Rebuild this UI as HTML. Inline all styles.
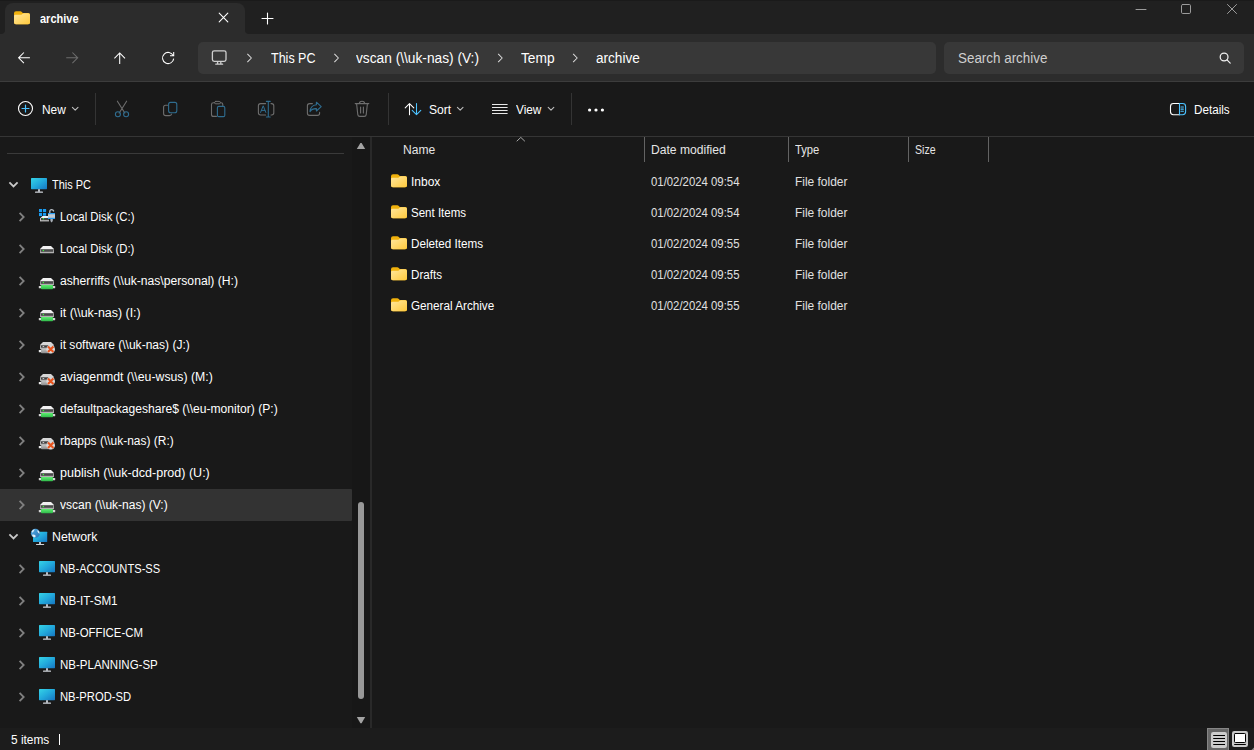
<!DOCTYPE html>
<html><head><meta charset="utf-8"><title>archive</title>
<style>
*{box-sizing:border-box;margin:0;padding:0}
html,body{width:1254px;height:750px;overflow:hidden;background:#191919;font-family:"Liberation Sans",sans-serif;color:#fff;font-size:12px}
div{position:absolute}
#titlebar{left:0;top:0;width:1254px;height:34px;background:#202020;border-top:1px solid #1a1a1a}
#tab{left:5px;top:2.5px;width:240px;height:31.5px;background:#2c2c2c;border-radius:8px 8px 0 0}
#navbar{left:0;top:34px;width:1254px;height:48px;background:#2c2c2c;border-bottom:1px solid #3c3c3c}
#addr{left:198px;top:42px;width:738px;height:32px;background:#383838;border-radius:5px}
#search{left:944px;top:42px;width:300px;height:32px;background:#383838;border-radius:5px}
#toolbar{left:0;top:82px;width:1254px;height:55px;background:#191919;border-bottom:1px solid #353535}
.vs{width:1px;top:93px;height:32px;background:#343434}
.cs{width:1px;top:137px;height:25px;background:#636363}
#navdiv{left:7px;top:153px;width:337px;height:1px;background:#3a3a3a}
#panediv{left:370px;top:137px;width:2px;height:591px;background:#292929}
#track{left:352px;top:137px;width:18px;height:591px;background:#171717}
#sel{left:0;top:489px;width:352px;height:32px;background:#333;border-radius:0 1px 1px 0}
#thumb{left:358px;top:501.5px;width:6px;height:197.5px;background:#989898;border-radius:3px}
#status{left:0;top:728px;width:1254px;height:22px;background:#1c1c1c}
#vb1{left:1207px;top:728px;width:22px;height:23px;background:#676767;border:1px solid #868686}
.t{position:absolute;white-space:pre;line-height:16px;color:#fff;transform-origin:0 50%}
svg{position:absolute;left:0;top:0;overflow:visible}
</style></head><body>
<div id="titlebar"></div>
<div id="tab"></div>
<div id="navbar"></div>
<div id="addr"></div>
<div id="search"></div>
<div id="toolbar"></div>
<div class="vs" style="left:95px"></div><div class="vs" style="left:388px"></div><div class="vs" style="left:571px"></div>
<div id="navdiv"></div>
<div id="track"></div>
<div id="panediv"></div>
<div id="sel"></div>
<div id="thumb"></div>
<div class="cs" style="left:644px"></div><div class="cs" style="left:788px"></div><div class="cs" style="left:908px"></div><div class="cs" style="left:988px"></div>
<div id="status"></div>
<div id="vb1"></div>
<span class="t" style="left:39.5px;top:10.8px;font-size:12px;transform:scaleX(0.9160);font-weight:700">archive</span>
<span class="t" style="left:271.2px;top:50.1px;font-size:14px;transform:scaleX(0.8936)">This PC</span>
<span class="t" style="left:356.1px;top:50.1px;font-size:14px;transform:scaleX(0.9800)">vscan (\\uk-nas) (V:)</span>
<span class="t" style="left:520.7px;top:50.1px;font-size:14px;transform:scaleX(0.9815)">Temp</span>
<span class="t" style="left:595.5px;top:50.1px;font-size:14px;transform:scaleX(0.9703)">archive</span>
<span class="t" style="left:958.0px;top:50.1px;font-size:14px;transform:scaleX(0.9573);color:#cfcfcf">Search archive</span>
<span class="t" style="left:42.0px;top:101.8px;font-size:12px;transform:scaleX(0.9910)">New</span>
<span class="t" style="left:428.7px;top:101.8px;font-size:12px;transform:scaleX(1.0084)">Sort</span>
<span class="t" style="left:515.8px;top:101.8px;font-size:12px;transform:scaleX(0.9846)">View</span>
<span class="t" style="left:1194.0px;top:101.8px;font-size:12px;transform:scaleX(0.9731)">Details</span>
<span class="t" style="left:52.2px;top:176.8px;font-size:12px;transform:scaleX(0.9113)">This PC</span>
<span class="t" style="left:59.9px;top:208.8px;font-size:12px;transform:scaleX(0.9468)">Local Disk (C:)</span>
<span class="t" style="left:59.9px;top:240.8px;font-size:12px;transform:scaleX(0.9455)">Local Disk (D:)</span>
<span class="t" style="left:59.9px;top:272.8px;font-size:12px;transform:scaleX(1.0123)">asherriffs (\\uk-nas\personal) (H:)</span>
<span class="t" style="left:59.9px;top:304.8px;font-size:12px;transform:scaleX(1.0344)">it (\\uk-nas) (I:)</span>
<span class="t" style="left:59.9px;top:336.8px;font-size:12px;transform:scaleX(1.0034)">it software (\\uk-nas) (J:)</span>
<span class="t" style="left:59.9px;top:368.8px;font-size:12px;transform:scaleX(1.0229)">aviagenmdt (\\eu-wsus) (M:)</span>
<span class="t" style="left:59.9px;top:400.8px;font-size:12px;transform:scaleX(1.0074)">defaultpackageshare$ (\\eu-monitor) (P:)</span>
<span class="t" style="left:59.9px;top:432.8px;font-size:12px;transform:scaleX(0.9971)">rbapps (\\uk-nas) (R:)</span>
<span class="t" style="left:59.9px;top:464.8px;font-size:12px;transform:scaleX(1.0447)">publish (\\uk-dcd-prod) (U:)</span>
<span class="t" style="left:59.9px;top:496.8px;font-size:12px;transform:scaleX(1.0011)">vscan (\\uk-nas) (V:)</span>
<span class="t" style="left:51.8px;top:528.8px;font-size:12px;transform:scaleX(1.0315)">Network</span>
<span class="t" style="left:59.9px;top:560.8px;font-size:12px;transform:scaleX(0.9276)">NB-ACCOUNTS-SS</span>
<span class="t" style="left:59.9px;top:592.8px;font-size:12px;transform:scaleX(0.9706)">NB-IT-SM1</span>
<span class="t" style="left:59.9px;top:624.8px;font-size:12px;transform:scaleX(0.9504)">NB-OFFICE-CM</span>
<span class="t" style="left:59.9px;top:656.8px;font-size:12px;transform:scaleX(0.9585)">NB-PLANNING-SP</span>
<span class="t" style="left:59.9px;top:688.8px;font-size:12px;transform:scaleX(0.9353)">NB-PROD-SD</span>
<span class="t" style="left:402.9px;top:141.8px;font-size:12px;transform:scaleX(1.0058);color:#e6e6e6">Name</span>
<span class="t" style="left:650.9px;top:141.8px;font-size:12px;transform:scaleX(1.0088);color:#e6e6e6">Date modified</span>
<span class="t" style="left:795.2px;top:141.8px;font-size:12px;transform:scaleX(0.9341);color:#e6e6e6">Type</span>
<span class="t" style="left:914.6px;top:141.8px;font-size:12px;transform:scaleX(0.8825);color:#e6e6e6">Size</span>
<span class="t" style="left:410.9px;top:173.8px;font-size:12px;transform:scaleX(0.9980)">Inbox</span>
<span class="t" style="left:650.5px;top:173.8px;font-size:12px;transform:scaleX(0.9473);color:#e0e0e0">01/02/2024 09:54</span>
<span class="t" style="left:794.7px;top:173.8px;font-size:12px;transform:scaleX(0.9945);color:#e0e0e0">File folder</span>
<span class="t" style="left:410.9px;top:204.8px;font-size:12px;transform:scaleX(0.9606)">Sent Items</span>
<span class="t" style="left:650.5px;top:204.8px;font-size:12px;transform:scaleX(0.9473);color:#e0e0e0">01/02/2024 09:54</span>
<span class="t" style="left:794.7px;top:204.8px;font-size:12px;transform:scaleX(0.9945);color:#e0e0e0">File folder</span>
<span class="t" style="left:410.9px;top:235.8px;font-size:12px;transform:scaleX(0.9737)">Deleted Items</span>
<span class="t" style="left:650.5px;top:235.8px;font-size:12px;transform:scaleX(0.9473);color:#e0e0e0">01/02/2024 09:55</span>
<span class="t" style="left:794.7px;top:235.8px;font-size:12px;transform:scaleX(0.9945);color:#e0e0e0">File folder</span>
<span class="t" style="left:410.9px;top:266.8px;font-size:12px;transform:scaleX(0.9683)">Drafts</span>
<span class="t" style="left:650.5px;top:266.8px;font-size:12px;transform:scaleX(0.9473);color:#e0e0e0">01/02/2024 09:55</span>
<span class="t" style="left:794.7px;top:266.8px;font-size:12px;transform:scaleX(0.9945);color:#e0e0e0">File folder</span>
<span class="t" style="left:410.9px;top:297.8px;font-size:12px;transform:scaleX(0.9743)">General Archive</span>
<span class="t" style="left:650.5px;top:297.8px;font-size:12px;transform:scaleX(0.9473);color:#e0e0e0">01/02/2024 09:55</span>
<span class="t" style="left:794.7px;top:297.8px;font-size:12px;transform:scaleX(0.9945);color:#e0e0e0">File folder</span>
<span class="t" style="left:11.0px;top:731.8px;font-size:12px;transform:scaleX(0.9900)">5 items</span>
<svg width="1254" height="750" viewBox="0 0 1254 750" fill="none" stroke-linecap="round" stroke-linejoin="round">
<defs>
<linearGradient id="gf" x1="0" y1="0" x2="1" y2="1"><stop offset="0" stop-color="#ffe79e"/><stop offset="1" stop-color="#ffc93c"/></linearGradient>
<linearGradient id="gm" x1="0" y1="0" x2="1" y2="1"><stop offset="0" stop-color="#35d3e6"/><stop offset="0.5" stop-color="#22a9dc"/><stop offset="1" stop-color="#1676c2"/></linearGradient>
<linearGradient id="gg" x1="0" y1="0" x2="0" y2="1"><stop offset="0" stop-color="#5ff070"/><stop offset="1" stop-color="#2fb84a"/></linearGradient>
<linearGradient id="gl" x1="0" y1="0" x2="1" y2="1"><stop offset="0" stop-color="#5ab0e6"/><stop offset="1" stop-color="#2672b4"/></linearGradient>
<linearGradient id="gp" x1="0" y1="0" x2="0" y2="1"><stop offset="0" stop-color="#c4c4c4"/><stop offset="1" stop-color="#8a8a8a"/></linearGradient>
<g id="folder" stroke="none">
<path d="M0 2.2 Q0 0.2 2 0.2 H6.3 Q7.2 0.2 7.8 0.9 L8.8 2.1 H14.2 Q16 2.1 16 3.9 V11.4 Q16 13.2 14.2 13.2 H1.8 Q0 13.2 0 11.4Z" fill="#f0b10c"/>
<path d="M0 5 Q0 3.7 1.4 3.7 H6.6 Q7.4 3.7 8 3.2 L8.6 2.7 Q9.2 2.3 10 2.3 H14.3 Q16 2.3 16 4 V11.4 Q16 13.2 14.2 13.2 H1.8 Q0 13.2 0 11.4Z" fill="url(#gf)"/>
</g>
<g id="mon" stroke="none">
<rect x="0" y="0" width="16" height="11.2" rx="0.6" fill="url(#gm)"/>
<rect x="7" y="11.2" width="2" height="2.6" fill="#b9c0c8"/>
<rect x="4" y="13.6" width="8" height="1.2" rx="0.4" fill="#cfd4da"/>
</g>
<g id="drv" stroke="none">
<path d="M3 0 H11 L14 3 H0Z" fill="#f1f1f1"/>
<rect x="0" y="3" width="14" height="4.2" rx="0.4" fill="#b0b0b0"/>
<rect x="0.8" y="3.3" width="12.4" height="2.5" fill="#4a4a4a"/>
<circle cx="3.4" cy="4.5" r="0.75" fill="#3cf03c"/>
</g>
<g id="ndrv" stroke="none">
<use href="#drv"/>
<rect x="-1.2" y="8" width="16.4" height="2.2" rx="0.5" fill="#d6d6d6"/>
<rect x="1" y="6.9" width="12" height="4.4" rx="0.8" fill="url(#gg)"/>
</g>
<g id="xdrv" stroke="none">
<path d="M3 0 H11 L14 3 H0Z" fill="#d6d6d6"/>
<rect x="0" y="3" width="14" height="4.2" rx="0.4" fill="#b4b4b4"/>
<rect x="1" y="3.4" width="7" height="2.2" fill="#3c3c3c"/>
<rect x="2.6" y="4" width="1.6" height="0.9" fill="#d8d8d8"/>
<rect x="-1.2" y="8" width="6" height="2.2" rx="0.5" fill="#ececec"/>
<rect x="1" y="6.9" width="12" height="4.4" rx="0.8" fill="url(#gp)"/>
<circle cx="10.7" cy="7.2" r="4.3" fill="#d9d9d9"/>
<path d="M8 4.5 L13.4 9.9 M13.4 4.5 L8 9.9" stroke="#e9531c" stroke-width="2.1" stroke-linecap="butt"/>
</g>
<path id="chr" d="M0 0 L4.1 4.2 L0 8.4" stroke="#808080" stroke-width="1.8" fill="none" stroke-linecap="butt" stroke-linejoin="miter"/>
<path id="chd" d="M0 0 L4.1 4.1 L8.2 0" stroke="#c8c8c8" stroke-width="1.8" fill="none" stroke-linecap="butt" stroke-linejoin="miter"/>
<path id="bc" d="M0.2 0.2 L4 4 L0.2 7.8" stroke="#dcdcdc" stroke-width="1.05" fill="none"/>
<path id="dd" d="M0 0 L2.8 2.8 L5.6 0" stroke="#bdbdbd" stroke-width="1.1" fill="none"/>
</defs>

<!-- tab -->
<use href="#folder" x="14" y="11"/>
<path d="M219.2 13.2 L227.8 21.8 M227.8 13.2 L219.2 21.8" stroke="#fff" stroke-width="1.1"/>
<path d="M262 18.5 H273 M267.5 13 V24" stroke="#fff" stroke-width="1.1"/>
<!-- tab outer curves -->
<path d="M1 34 H5 V30 Q5 34 1 34Z" fill="#2c2c2c" stroke="none"/>
<path d="M249 34 H245 V30 Q245 34 249 34Z" fill="#2c2c2c" stroke="none"/>
<!-- window controls -->
<g stroke="#9b9b9b" stroke-width="1">
<path d="M1136 9.5 H1146"/>
<rect x="1181.5" y="4.5" width="9" height="9" rx="1.2"/>
<path d="M1227.2 4.2 L1236.8 13.8 M1236.8 4.2 L1227.2 13.8" stroke-linecap="butt"/>
</g>
<!-- nav arrows -->
<g stroke="#fff" stroke-width="1.05" stroke-linecap="butt" stroke-linejoin="miter">
<path d="M18.8 57.8 H29.9 M23.9 52.5 L18.6 57.8 L23.9 63.1"/>
<path d="M119.7 53 V64 M114.4 58.3 L119.7 53 L125 58.3"/>
<path d="M173.2 55.6 A5.6 5.6 0 1 0 173.7 58.6 M173.7 52 V55.7 H170"/>
</g>
<path d="M66.2 57.8 H77.5 M72.4 52.5 L77.7 57.8 L72.4 63.1" stroke="#6c6c6c" stroke-width="1.05" stroke-linecap="butt" stroke-linejoin="miter"/>
<!-- address icons -->
<g stroke="#cfcfcf" stroke-width="1.3">
<rect x="212.4" y="50.8" width="13.6" height="10.6" rx="1.8"/>
<path d="M217.6 61.6 V64 M220.8 61.6 V64 M215.8 64.2 H222.6"/>
</g>
<use href="#bc" x="247.4" y="54"/>
<use href="#bc" x="334.4" y="54"/>
<use href="#bc" x="498.2" y="54"/>
<use href="#bc" x="573.2" y="54"/>
<!-- search -->
<g stroke="#f0f0f0" stroke-width="1.25"><circle cx="1224.1" cy="57" r="3.9"/><path d="M1227 59.9 L1230.2 63.1"/></g>

<!-- toolbar: New -->
<circle cx="25.5" cy="108.5" r="7" stroke="#fff" stroke-width="1.1"/>
<path d="M22 108.5 H29 M25.5 105 V112" stroke="#4cc2ff" stroke-width="1.2"/>
<use href="#dd" x="72.4" y="107.4"/>
<!-- cut -->
<path d="M117.4 101.2 L124.8 113 M126.6 101.2 L119.2 113" stroke="#6e6e6e" stroke-width="1.1"/>
<circle cx="117.9" cy="114.2" r="2.5" stroke="#2f6d90" stroke-width="1.1"/><circle cx="126.1" cy="114.2" r="2.5" stroke="#2f6d90" stroke-width="1.1"/>
<!-- copy -->
<path d="M167.5 105.2 H165.6 Q163.6 105.2 163.6 107.2 V113.4 Q163.6 115.6 165.8 115.6 H169.4 Q171.4 115.6 171.6 114" stroke="#6e6e6e" stroke-width="1.1"/>
<rect x="168.6" y="102.4" width="8.2" height="10.4" rx="2" stroke="#2f6d90" stroke-width="1.1"/>
<!-- paste -->
<path d="M216.4 116.4 H213.4 Q211.5 116.4 211.5 114.4 V104.6 Q211.5 102.8 213.4 102.8 H214.6 M220.4 102.8 H221 Q222.8 102.8 222.8 104.6 V105.6" stroke="#6e6e6e" stroke-width="1.1"/>
<rect x="214.6" y="101.4" width="5.8" height="2.4" rx="1.2" stroke="#6e6e6e" stroke-width="1"/>
<rect x="217.4" y="106.4" width="7.4" height="10.2" rx="1.4" stroke="#2f6d90" stroke-width="1.1"/>
<!-- rename -->
<path d="M265.6 103.6 H260.6 Q258.4 103.6 258.4 105.8 V112.8 Q258.4 115 260.6 115 H265.6 M271 103.6 H271.6 Q273.8 103.6 273.8 105.8 V112.8 Q273.8 115 271.6 115 H271" stroke="#6e6e6e" stroke-width="1.1"/>
<path d="M268.3 101.4 V117 M266.4 101.4 H270.2 M266.4 117 H270.2" stroke="#2f6d90" stroke-width="1.1"/>
<path d="M260.6 112.4 L263.2 105.8 L265.8 112.4 M261.5 110.4 H264.9" stroke="#2f6d90" stroke-width="1"/>
<!-- share -->
<path d="M312.4 103.6 H309.6 Q307.4 103.6 307.4 105.8 V113.2 Q307.4 115.4 309.6 115.4 H317.4 Q319.6 115.4 319.6 113.2 V112.4" stroke="#6e6e6e" stroke-width="1.1"/>
<path d="M316.4 102.2 L321.2 106.6 L316.4 111 V108.6 Q312 108.4 310 111.6 Q310.6 105.4 316.4 104.8Z" stroke="#2f6d90" stroke-width="1.1"/>
<!-- delete -->
<path d="M355.2 103.6 H368.8 M359.4 103.4 Q359.4 101.2 362 101.2 Q364.6 101.2 364.6 103.4 M356.6 103.8 L357.8 114.6 Q358 116.4 359.8 116.4 H364.2 Q366 116.4 366.2 114.6 L367.4 103.8 M360.6 107 V113 M363.4 107 V113" stroke="#6e6e6e" stroke-width="1.1"/>
<!-- sort -->
<path d="M409.5 114.8 V103.6 M405.2 107.9 L409.5 103.6 L413.8 107.9" stroke="#fff" stroke-width="1.05"/>
<path d="M416.5 103.4 V114.6 M412.2 110.3 L416.5 114.6 L420.8 110.3" stroke="#4cc2ff" stroke-width="1.05"/>
<use href="#dd" x="457.4" y="107.4"/>
<!-- view -->
<path d="M492 104.5 H507.6 M492 107.5 H507.6 M492 110.5 H507.6 M492 113.5 H507.6" stroke="#e8e8e8" stroke-width="1" stroke-linecap="butt"/>
<use href="#dd" x="548.2" y="107.4"/>
<!-- more -->
<g fill="#fff" stroke="none"><circle cx="589.6" cy="110" r="1.6"/><circle cx="596" cy="110" r="1.6"/><circle cx="602.4" cy="110" r="1.6"/></g>
<!-- details -->
<path d="M1179.5 103.5 H1173.4 Q1170.5 103.5 1170.5 106.4 V111.8 Q1170.5 114.7 1173.4 114.7 H1179.5" stroke="#fff" stroke-width="1.1"/>
<path d="M1179.5 103.5 H1182.6 Q1185.6 103.5 1185.6 106.4 V111.8 Q1185.6 114.7 1182.6 114.7 H1179.5Z M1181 107 H1183.4 M1181 109.1 H1183.4 M1181 111.2 H1183.4" stroke="#4cc2ff" stroke-width="1.1"/>

<!-- scroll arrows -->
<path d="M356.8 149 L360.4 143 H361.6 L365.2 149Z" fill="#a3a3a3" stroke="none"/>
<path d="M356.8 717 L360.4 723.2 H361.6 L365.2 717Z" fill="#a3a3a3" stroke="none"/>
<!-- sort caret -->
<path d="M517 141 L520.8 137.4 L524.6 141" stroke="#a8a8a8" stroke-width="1"/>

<!-- nav pane icons -->
<use href="#chd" x="9.4" y="182.4"/>
<use href="#mon" x="31" y="178"/>
<use href="#chd" x="9.4" y="534.4"/>
<!-- network icon -->
<g stroke="none">
<rect x="33" y="531.8" width="14.2" height="10.2" rx="0.5" fill="url(#gm)"/>
<rect x="39" y="542" width="2" height="2.2" fill="#b9c0c8"/><rect x="36" y="544" width="8.2" height="1.1" rx="0.4" fill="#cfd4da"/>
<circle cx="35.4" cy="533.2" r="4.5" fill="url(#gl)"/>
<path d="M31.6 531.6 Q32.6 529.6 34.8 529.2 Q34 531 32.6 532.8Z M37.6 530 Q39.6 531.2 39.7 533.8 Q38.2 533.2 37.4 531.4Z M31.8 534.8 Q33.6 533.8 35.4 535.2 Q36 536.6 35 537.6 Q32.6 537.2 31.8 534.8Z" fill="#e4eef7"/>
</g>
<!-- drives -->
<g stroke="none">
<!-- C: -->
<path d="M42.5 216 H48.5 V218.6 H40Z" fill="#f1f1f1"/>
<rect x="40" y="218" width="9" height="3.4" fill="#c2c2c2"/><rect x="41" y="218" width="8" height="2.2" fill="#454545"/><circle cx="43.4" cy="218.7" r="0.75" fill="#3cf03c"/>
<g fill="#1b9bf0"><rect x="39" y="209" width="3.1" height="3.1"/><rect x="43" y="209" width="3.1" height="3.1"/><rect x="39" y="213" width="3.1" height="3.1"/><rect x="43" y="213" width="3.1" height="2.8"/></g>
<path d="M49.8 213 V211.6 Q49.8 209.6 51.6 209.6 Q53.2 209.6 53.6 211" stroke="#b9c0c8" stroke-width="1.3" fill="none"/>
<rect x="48" y="213" width="7" height="6" fill="#c3cad2"/><rect x="48" y="213" width="7" height="1.2" fill="#2a9df0"/><rect x="48" y="217.8" width="7" height="1.2" fill="#2a9df0"/>
<path d="M50.4 219 H52.8 V221 L51.6 222.6 L50.4 221Z" fill="#aab1b9"/>
</g>
<use href="#drv" x="40" y="246"/>
<use href="#ndrv" x="40" y="278"/>
<use href="#ndrv" x="40" y="310"/>
<use href="#xdrv" x="40" y="342"/>
<use href="#xdrv" x="40" y="374"/>
<use href="#ndrv" x="40" y="406"/>
<use href="#xdrv" x="40" y="438"/>
<use href="#ndrv" x="40" y="470"/>
<use href="#ndrv" x="40" y="502"/>
<use href="#mon" x="39" y="561"/><use href="#mon" x="39" y="593"/><use href="#mon" x="39" y="625"/><use href="#mon" x="39" y="657"/><use href="#mon" x="39" y="689"/>
<!-- nav chevrons -->
<use href="#chr" x="19.6" y="212.8"/><use href="#chr" x="19.6" y="244.8"/><use href="#chr" x="19.6" y="276.8"/><use href="#chr" x="19.6" y="308.8"/><use href="#chr" x="19.6" y="340.8"/><use href="#chr" x="19.6" y="372.8"/><use href="#chr" x="19.6" y="404.8"/><use href="#chr" x="19.6" y="436.8"/><use href="#chr" x="19.6" y="468.8"/><use href="#chr" x="19.6" y="500.8"/>
<use href="#chr" x="19.6" y="564.8"/><use href="#chr" x="19.6" y="596.8"/><use href="#chr" x="19.6" y="628.8"/><use href="#chr" x="19.6" y="660.8"/><use href="#chr" x="19.6" y="692.8"/>
<!-- file folders -->
<use href="#folder" x="391" y="174"/><use href="#folder" x="391" y="205"/><use href="#folder" x="391" y="236"/><use href="#folder" x="391" y="267"/><use href="#folder" x="391" y="298"/>
<!-- status bar -->
<path d="M59.5 734 V745" stroke="#fff" stroke-width="1" stroke-linecap="butt"/>
<g stroke="none">
<rect x="1211" y="732" width="16" height="16" rx="2.2" fill="#cdcdcd"/>
<path d="M1213.2 735.5 H1225 M1213.2 738.5 H1225 M1213.2 741.5 H1225 M1213.2 744.5 H1225" stroke="#000" stroke-width="1.1" stroke-linecap="butt"/>
<rect x="1232" y="731" width="16" height="16" rx="2.2" fill="#c9c9c9"/>
<rect x="1234.5" y="733.5" width="11" height="9" rx="0.8" fill="#fff" stroke="#000" stroke-width="1"/>
<path d="M1234.2 744.5 H1245.8" stroke="#000" stroke-width="1" stroke-linecap="butt"/>
</g>
<path d="M1254 747.5 L1251.5 750 H1254Z" fill="#8a8a8a" stroke="none"/>
</svg>

</body></html>
